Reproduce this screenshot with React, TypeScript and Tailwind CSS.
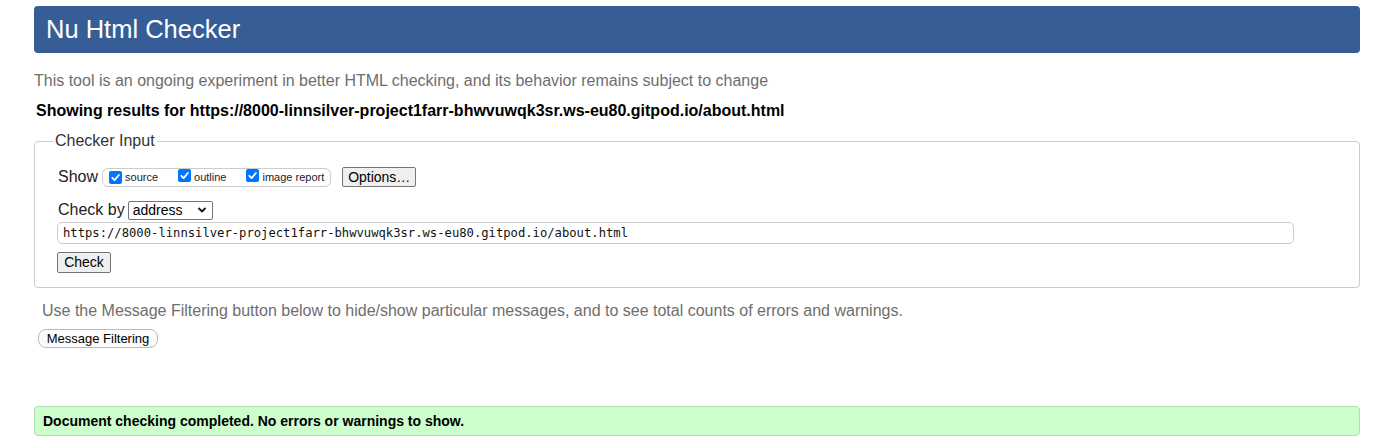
import React from "react";

function Check() {
  return (
    <span className="inline-flex h-[13px] w-[13px] items-center justify-center rounded-[2px] bg-[#0075ff]">
      <svg width="11" height="11" viewBox="0 0 12 12">
        <path d="M2.5 6.3 L5 8.8 L9.7 3.3" fill="none" stroke="white" strokeWidth="2" strokeLinecap="round" strokeLinejoin="round" />
      </svg>
    </span>
  );
}

export default function App() {
  return (
    <div className="min-h-[446px] bg-white pl-[34px] pr-[20px] pt-[6px] text-[16px] text-black" style={{ fontFamily: '"Liberation Sans", Arial, sans-serif' }}>
      <div className="flex h-[47px] items-center rounded-[4px] bg-[#375d96] pl-[12px]">
        <h1 className="text-[25.5px] leading-none text-white">Nu Html Checker</h1>
      </div>

      <p className="mt-[19px] h-[18px] leading-[18px] text-[#6e6e6e]">
        This tool is an ongoing experiment in better HTML checking, and its behavior remains subject to change
      </p>
      <p className="mt-[12px] h-[18px] pl-[2px] font-bold leading-[18px]">
        Showing results for https://8000-linnsilver-project1farr-bhwvuwqk3sr.ws-eu80.gitpod.io/about.html
      </p>

      <fieldset className="mt-[12px] rounded-[4px] border border-[#cccccc] pb-[14px] pl-[23px] pr-[65px]">
        <legend className="-ml-[5px] px-[2px] leading-[18px] text-[#333333]">Checker Input</legend>

        <div className="mt-[17px] flex h-[20px] items-center">
          <span className="leading-[18px] text-[#222222]">Show</span>
          <div className="ml-[4px] flex h-[19px] items-center rounded-[6px] border border-[#cccccc] pl-[6px] pr-[6px] text-[11px] text-[#222222]">
            <Check />
            <span className="ml-[3px]">source</span>
            <span className="ml-[20px]"><Check /></span>
            <span className="ml-[3px]">outline</span>
            <span className="ml-[20px]"><Check /></span>
            <span className="ml-[3px]">image report</span>
          </div>
          <button className="ml-[11px] flex h-[20px] w-[74px] items-center justify-center rounded-[2px] border border-[#767676] bg-[#efefef] text-[14px] text-black">
            Options…
          </button>
        </div>

        <div className="mt-[13px] flex h-[20px] items-center">
          <span className="leading-[18px] text-[#222222]">Check by</span>
          <div className="ml-[3px] flex h-[19px] w-[85px] items-center justify-between rounded-[2px] border border-[#767676] pl-[4px] pr-[5px] text-[14px]">
            <span>address</span>
            <svg width="10" height="8" viewBox="0 0 10 8">
              <path d="M1.5 2 L5 5.5 L8.5 2" fill="none" stroke="#111" strokeWidth="1.8" />
            </svg>
          </div>
        </div>

        <div
          className="-ml-[1px] mt-[2px] flex h-[22px] items-center rounded-[5px] border border-[#cccccc] pl-[5px] text-[12.2px] text-[#111111]"
          style={{ fontFamily: '"DejaVu Sans Mono", "Liberation Mono", monospace' }}
        >
          https://8000-linnsilver-project1farr-bhwvuwqk3sr.ws-eu80.gitpod.io/about.html
        </div>

        <button className="-ml-[1px] mt-[8px] flex h-[21px] w-[54px] items-center justify-center rounded-[2px] border border-[#767676] bg-[#efefef] text-[14px] text-black">
          Check
        </button>
      </fieldset>

      <p className="ml-[8px] mt-[14px] h-[18px] leading-[18px] text-[#6e6e6e]">
        Use the Message Filtering button below to hide/show particular messages, and to see total counts of errors and warnings.
      </p>
      <button className="ml-[4px] mt-[9px] flex h-[19px] w-[120px] items-center justify-center rounded-[8px] border border-[#bbbbbb] bg-[#fbfbfb] text-[13px] text-black">
        Message Filtering
      </button>

      <div className="mt-[58px] flex h-[30px] items-center rounded-[4px] border border-[#b5dbb5] bg-[#ccffcc] pl-[8px] text-[14px] font-bold">
        Document checking completed. No errors or warnings to show.
      </div>
    </div>
  );
}
